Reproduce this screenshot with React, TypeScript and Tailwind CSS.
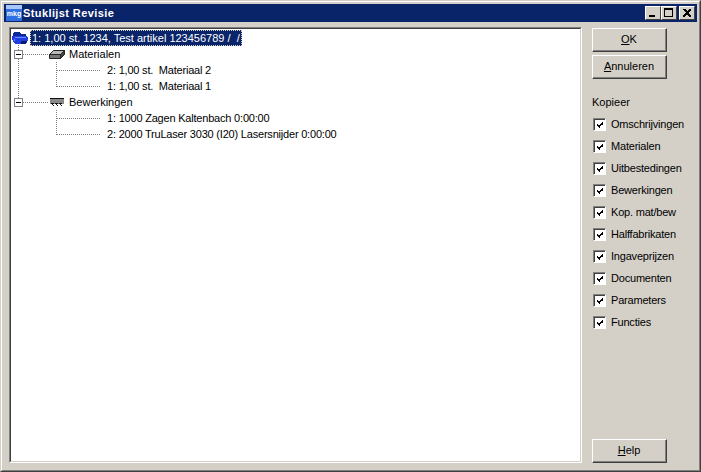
import React from "react";

const FONT = "font-['Liberation_Sans',Arial,sans-serif]";

const options = [
  "Omschrijvingen",
  "Materialen",
  "Uitbestedingen",
  "Bewerkingen",
  "Kop. mat/bew",
  "Halffabrikaten",
  "Ingaveprijzen",
  "Documenten",
  "Parameters",
  "Functies",
];

function WinButton({ accel, rest }: { accel: string; rest: string }) {
  return (
    <button className="block w-[75px] h-[24px] p-0 bg-[#d4d0c8] border-t border-l border-t-white border-l-white border-r border-b border-r-[#404040] border-b-[#404040]">
      <span className="flex items-center justify-center w-full h-full border-r border-b border-r-[#808080] border-b-[#808080] text-[11px] text-black">
        <span className="underline">{accel}</span>
        {rest}
      </span>
    </button>
  );
}

function CaptionButton({ children, className = "" }: { children: React.ReactNode; className?: string }) {
  return (
    <div className={`w-[16px] h-[14px] bg-[#d4d0c8] border-t border-l border-t-white border-l-white border-r border-b border-r-[#404040] border-b-[#404040] ${className}`}>
      <svg width="14" height="12" viewBox="0 0 14 12" shapeRendering="crispEdges">
        {children}
      </svg>
    </div>
  );
}

function Check({ label }: { label: string }) {
  return (
    <div className="flex items-center h-[22px]">
      <div className="w-[13px] h-[13px] ml-[1px] bg-white border-t border-l border-t-[#808080] border-l-[#808080] border-r border-b border-r-white border-b-white">
        <svg width="11" height="11" viewBox="0 0 11 11" shapeRendering="crispEdges" className="border-t border-l border-t-[#404040] border-l-[#404040]">
          <path d="M2 4h1v3h-1zM3 5h1v3h-1zM4 6h1v3h-1zM5 5h1v3h-1zM6 4h1v3h-1zM7 3h1v3h-1zM8 2h1v3h-1z" fill="#000" />
        </svg>
      </div>
      <span className="ml-[5px] text-[11px] tracking-[-0.2px] text-black">{label}</span>
    </div>
  );
}

function TreeRow({ indent, icon, children, selected, tight }: { indent: number; icon?: React.ReactNode; children: React.ReactNode; selected?: boolean; tight?: boolean }) {
  return (
    <div className={`flex items-center h-[16px] whitespace-pre text-[11px] text-black ${tight ? "tracking-[-0.2px]" : ""}`} style={{ paddingLeft: indent }}>
      {icon}
      {selected ? (
        <span className="flex items-center h-[16px] px-[2px] bg-[#0a246a] text-white outline-1 outline-dotted outline-[#d4d0c8] -outline-offset-1">{children}</span>
      ) : (
        <span>{children}</span>
      )}
    </div>
  );
}

function FolderIcon() {
  return (
    <svg width="17" height="14" viewBox="0 0 17 14" className="mr-[1px]" shapeRendering="crispEdges">
      <path d="M1 2h1V1h6v1h1v1h5v2H1z" fill="#0a2a9a" />
      <path d="M0 5h15v1h1v4h-1v2h-1v1H3v-1H2v-1H1V9H0z" fill="#1f3fe0" />
      <path d="M3 6h11v1H3zM2 8h1v2H2z" fill="#6f8cff" />
      <path d="M9 10h6v1h-1v2H9z" fill="#0a1a70" />
    </svg>
  );
}

function MaterialIcon() {
  return (
    <svg width="16" height="9" viewBox="0 0 16 9" className="mr-[4px]">
      <path d="M0.500 4.500 L4.500 0.500 H15.500 L11.500 4.500 Z" fill="#b8b8b8" stroke="#222" />
      <path d="M0.500 4.500 H11.500 V8.500 H0.500 Z" fill="#777" stroke="#222" />
      <path d="M11.500 4.500 L15.500 0.500 V4.500 L11.500 8.500 Z" fill="#444" stroke="#222" />
    </svg>
  );
}

function SawIcon() {
  return (
    <svg width="14" height="9" viewBox="0 0 14 9" className="ml-[1px] mr-[5px]" shapeRendering="crispEdges">
      <path d="M0 0h14v1H0z" fill="#111" />
      <path d="M0 1h14v5H0z" fill="#8a8a8a" />
      <path d="M1 5h3v1h-1v1h1v1H3V7H2V6H1zM5 5h3v1H7v1h1v1H7V7H6V6H5zM9 5h3v1h-1v1h1v1h-1V7h-1V6H9z" fill="#111" />
    </svg>
  );
}

function Expander({ y }: { y: number }) {
  return (
    <g>
      <rect x="3.500" y={y - 3.5} width="8" height="8" fill="#fff" stroke="#808080" />
      <path d={`M5 ${y + 0.5} h5`} stroke="#000" />
    </g>
  );
}

// dotted connector lines of the tree, coordinates are relative to the tree client area
function TreeLines() {
  const dot = { stroke: "#808080", strokeDasharray: "1 1", fill: "none" };
  return (
    <svg className="absolute left-0 top-0 pointer-events-none" width="120" height="120" shapeRendering="crispEdges">
      <path d="M7.500 16 V73" {...dot} />
      <path d="M12 25.500 H37" {...dot} />
      <path d="M12 73.500 H37" {...dot} />
      <path d="M45.500 33 V57.500 M45.500 41.500 H90 M45.500 57.500 H90" {...dot} />
      <path d="M45.500 81 V105.500 M45.500 89.500 H90 M45.500 105.500 H90" {...dot} />
      <Expander y={25} />
      <Expander y={73} />
    </svg>
  );
}

export default function App() {
  return (
    <div className={`w-[701px] h-[472px] overflow-hidden bg-[#d4d0c8] ${FONT} border-r border-b border-r-[#404040] border-b-[#404040] border-t border-l border-t-[#d4d0c8] border-l-[#d4d0c8]`}>
      <div className="h-full border-t border-l border-t-white border-l-white border-r border-b border-r-[#808080] border-b-[#808080] p-[2px] flex flex-col">
        <div className="h-[18px] shrink-0 bg-[#0a246a] flex items-center pl-[2px] pr-[2px]">
          <svg width="16" height="16" viewBox="0 0 16 16" className="shrink-0">
            <rect width="16" height="16" fill="#2f6fe0" />
            <rect y="0" width="16" height="4" fill="#a8c8f8" />
            <text x="8" y="11" textAnchor="middle" fontSize="7" fontWeight="700" fill="#fff" fontFamily="Liberation Sans">mkg</text>
          </svg>
          <span className="ml-[1px] text-[11px] font-bold text-white tracking-[0.4px]">Stuklijst Revisie</span>
          <div className="ml-auto flex">
            <CaptionButton>
              <path d="M3 8h6v2H3z" fill="#000" />
            </CaptionButton>
            <CaptionButton>
              <path d="M2 1h9v9H2z M3 3v6h7V3z" fill="#000" fillRule="evenodd" />
            </CaptionButton>
            <CaptionButton className="ml-[2px]">
              <path d="M3 2h2l2 2 2-2h2v1L8.500 5.500 11 9v1H9L7 7.500 5 10H3V9l2.500-3.500L3 3z" fill="#000" />
            </CaptionButton>
          </div>
        </div>
        <div className="flex flex-1 min-h-0 pt-[5px] pl-[5px] pr-[5px] pb-[5px]">
          <div className="w-[573px] shrink-0 border-t border-l border-t-[#808080] border-l-[#808080] border-r border-b border-r-white border-b-white">
            <div className="relative h-full bg-white border-t border-l border-t-[#404040] border-l-[#404040] border-r border-b border-r-[#d4d0c8] border-b-[#d4d0c8] pt-[1px]">
              <TreeLines />
              <TreeRow indent={1} icon={<FolderIcon />} selected>
                {"1: 1,00 st. 1234, Test artikel 123456789 /  /"}
              </TreeRow>
              <TreeRow indent={38} icon={<MaterialIcon />}>Materialen</TreeRow>
              <TreeRow indent={96} tight>{"2: 1,00 st.  Materiaal 2"}</TreeRow>
              <TreeRow indent={96} tight>{"1: 1,00 st.  Materiaal 1"}</TreeRow>
              <TreeRow indent={38} icon={<SawIcon />}>Bewerkingen</TreeRow>
              <TreeRow indent={96} tight>1: 1000 Zagen Kaltenbach 0:00:00</TreeRow>
              <TreeRow indent={96} tight>2: 2000 TruLaser 3030 (I20) Lasersnijder 0:00:00</TreeRow>
            </div>
          </div>
          <div className="flex-1 ml-[10px] pt-[1px] flex flex-col">
            <WinButton accel="O" rest="K" />
            <div className="mt-[3px]">
              <WinButton accel="A" rest="nnuleren" />
            </div>
            <div className="mt-[16px] h-[14px] leading-[14px] text-[11px] text-black">Kopieer</div>
            <div className="mt-[4px]">
              {options.map((o) => (
                <Check key={o} label={o} />
              ))}
            </div>
            <div className="mt-auto">
              <WinButton accel="H" rest="elp" />
            </div>
          </div>
        </div>
      </div>
    </div>
  );
}
